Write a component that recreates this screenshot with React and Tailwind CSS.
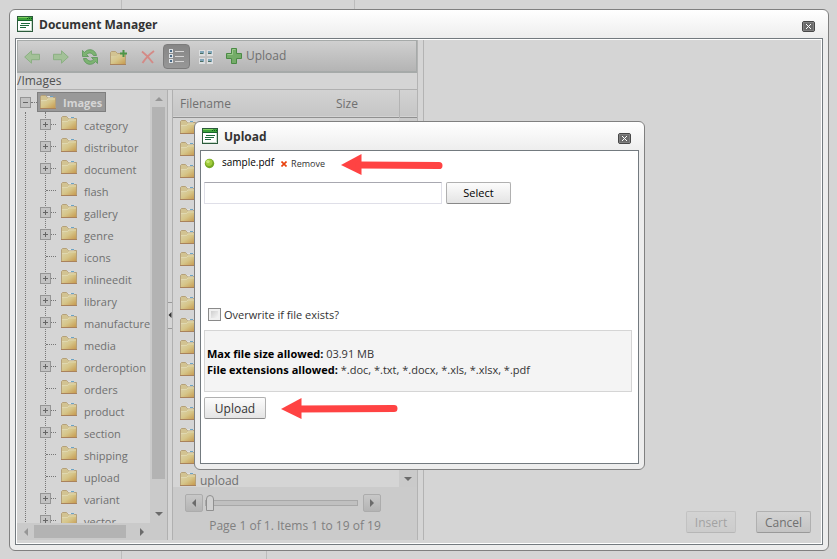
import React, { useState } from "react";
import clsx from "clsx";

const folders = [
  { name: "category", children: true },
  { name: "distributor", children: true },
  { name: "document", children: true },
  { name: "flash" },
  { name: "gallery", children: true },
  { name: "genre", children: true },
  { name: "icons" },
  { name: "inlineedit", children: true },
  { name: "library", children: true },
  { name: "manufacturer", children: true },
  { name: "media" },
  { name: "orderoption", children: true },
  { name: "orders" },
  { name: "product", children: true },
  { name: "section", children: true },
  { name: "shipping" },
  { name: "upload" },
  { name: "variant", children: true },
  { name: "vector", children: true },
];

export default function App() {
  return (
    <div className="relative flex h-screen flex-col overflow-hidden bg-[#d5d5d5] font-['Open_Sans','Noto_Sans',sans-serif] text-xs text-[#707070]">
      <div className="flex h-[9px] shrink-0">
        <div className="w-[122px] border-r border-[#bcbcbc]" />
        <div className="w-[233px] border-r border-[#bcbcbc]" />
      </div>
      <Window title="Document Manager" className="ml-[9px] mr-2 min-h-0 flex-1">
        <div className="flex min-h-0 flex-1 border border-white bg-[#d5d5d5] pb-[3px]">
          <Explorer />
          <div className="flex min-w-0 flex-1 items-end justify-end gap-5 pb-[7px] pr-[10px]">
            <DialogButton className="w-[50px] opacity-50" dim disabled>Insert</DialogButton>
            <DialogButton className="w-[55px]" dim>Cancel</DialogButton>
          </div>
        </div>
      </Window>
      <div className="flex h-2 shrink-0">
        <div className="w-[122px] border-r border-[#bcbcbc]" />
        <div className="w-[145px] border-r border-[#bcbcbc]" />
      </div>
      <Window title="Upload" className="absolute left-[194px] top-[121px] h-[349px] w-[451px]">
        <UploadForm />
      </Window>
      <Arrow className="absolute left-[341px] top-[153px]" length={102} tilt={1} />
      <Arrow className="absolute left-[281px] top-[397px]" length={117} tilt={-1} />
    </div>
  );
}

/* ---------------------- Windows ---------------------- */
const Window = ({ title, className, children }) => (
  <section
    className={clsx(
      "flex flex-col rounded-md border border-[#808080] bg-[#ededed] bg-linear-to-b from-white to-[#ededed] to-[29px] px-[5px] pb-[5px]",
      className
    )}
  >
    <header className="flex h-7 shrink-0 items-center pl-0.5">
      <WindowIcon />
      <h2 className="ml-1.5 flex-1 pt-0.5 font-bold leading-4 text-[#333]">{title}</h2>
      <button aria-label="Close" className="mr-2 mt-1">
        <svg width="13" height="11" viewBox="0 0 13 11">
          <rect x="0.5" y="0.5" width="12" height="10" rx="1.5" fill="#6b6b6b" stroke="#484848" />
          <rect x="1.5" y="1.5" width="10" height="8" fill="none" stroke="#808080" />
          <path d="M4 3l5 5M9 3L4 8" stroke="#fff" />
        </svg>
      </button>
    </header>
    <div className="flex min-h-0 flex-1 flex-col border border-[#737a7f]">{children}</div>
  </section>
);

const UploadForm = () => {
  const [overwrite, setOverwrite] = useState(false);

  return (
    <form className="flex flex-1 flex-col bg-white px-[3px] text-[#333]" onSubmit={(e) => e.preventDefault()}>
      <div className="flex h-6 items-center text-[10px] text-black">
        <svg width="11" height="11" viewBox="0 0 11 11">
          <circle cx="5.5" cy="5.5" r="4.7" fill="#76a824" />
          <circle cx="5" cy="4.6" r="3.4" fill="#a2cc3c" />
          <circle cx="4" cy="3.6" r="1.7" fill="#c8e878" />
        </svg>
        <span className="ml-[7px]">sample.pdf</span>
        <a href="#" className="ml-[7px] flex items-center gap-1 pt-0.5 text-[9px] text-[#333]">
          <svg width="6" height="6" viewBox="0 0 6 6">
            <path d="M0.5 0.5l5 5M5.5 0.5l-5 5" stroke="#e8400c" strokeWidth="1.6" />
          </svg>
          Remove
        </a>
      </div>
      <div className="mt-[7px] flex gap-1">
        <input
          type="text"
          aria-label="File"
          className="h-[22px] w-[238px] border border-[#dfdfe8] border-t-[#a8a8b0] bg-white px-1 outline-none"
        />
        <DialogButton className="w-[65px] text-[11px] text-black">Select</DialogButton>
      </div>
      <label className="mt-[102px] flex h-4 items-center gap-[3px] pl-1 text-[11px]">
        <input
          type="checkbox"
          checked={overwrite}
          onChange={(e) => setOverwrite(e.target.checked)}
          className="size-[13px] appearance-none border border-[#8a8a8a] bg-linear-to-br from-[#c4c4c4] to-white shadow-[inset_0_0_0_2px_#f0f0f0] checked:bg-[#777]"
        />
        <span className="pt-0.5">Overwrite if file exists?</span>
      </label>
      <div className="mt-2 mr-[3px] border border-[#d5d5d5] bg-[#f4f4f4] px-0.5 pb-[13px] pt-[15px] text-[11px] leading-4">
        <p><b className="text-black">Max file size allowed:</b> 03.91 MB</p>
        <p><b className="text-black">File extensions allowed:</b> *.doc, *.txt, *.docx, *.xls, *.xlsx, *.pdf</p>
      </div>
      <DialogButton className="mt-[5px] w-[62px]">Upload</DialogButton>
    </form>
  );
};

/* ---------------------- Explorer ---------------------- */
const Explorer = () => (
  <div className="flex w-[407px] shrink-0 border-r border-[#b3b3b3]">
    <div className="flex min-w-0 flex-1 flex-col border-r border-[#b3b3b3]">
      <Toolbar />
      <div className="h-[17px] border-b border-[#b0b0b0] leading-4 text-[#505050]">/Images</div>
      <div className="flex min-h-0 flex-1">
        <FolderTree />
        <div className="flex w-[6px] items-center border-x border-[#b0b0b0]">
          <button
            aria-label="Collapse"
            className="flex h-[27px] w-full items-center justify-center border-y border-[#999]"
          >
            <Caret dir="left" small />
          </button>
        </div>
        <FileGrid />
      </div>
    </div>
    <div className="w-[5px]" />
  </div>
);

const tools = [
  { label: "Back", icon: <ArrowIcon /> },
  { label: "Forward", icon: <ArrowIcon flip /> },
  { label: "Refresh", icon: <RefreshIcon /> },
  { label: "New folder", icon: <NewFolderIcon /> },
  { label: "Delete", icon: <DeleteIcon /> },
  { label: "List view", icon: <ListIcon />, active: true },
  { label: "Thumbnails view", icon: <ThumbsIcon /> },
];

const Toolbar = () => (
  <div className="flex h-[33px] shrink-0 items-center gap-0.5 border border-b-2 border-[#a6aaa9] bg-linear-to-b from-[#d0d0d0] to-[#b4b4b4]">
    {tools.map((t) => (
      <button
        key={t.label}
        aria-label={t.label}
        className={clsx(
          "flex h-[25px] w-[27px] items-center justify-center rounded-sm",
          t.active ? "border border-[#7c7c7c] bg-linear-to-b from-[#868686] to-[#979797]" : "pt-0.5"
        )}
      >
        {t.icon}
      </button>
    ))}
    <button className="ml-[5px] flex items-center gap-1">
      <svg width="16" height="16" viewBox="0 0 16 16">
        <path
          d="M5.5 0.5h5v5h5v5h-5v5h-5v-5h-5v-5h5z"
          fill="#74ac68"
          stroke="#4b8a45"
          strokeLinejoin="round"
        />
        <path d="M6.5 1.5v5h-5M9.5 1.5h-3" stroke="#9bc98d" fill="none" />
      </svg>
      Upload
    </button>
  </div>
);

const FolderTree = () => (
  <div className="flex w-[150px] shrink-0 flex-col text-[11px]">
    <div className="flex min-h-0 flex-1">
      <div className="min-w-0 flex-1 overflow-hidden pl-[3px] pt-0.5">
        <div className="flex h-5 items-center">
          <Expander open />
          <span className="w-[6px] border-t border-dotted border-[#777]" />
          <div className="flex h-5 items-center gap-[7px] border border-[#7f7f7f] bg-[#999] pl-0.5 pr-[3px] font-bold text-[#d5d5d5]">
            <FolderIcon />
            <span className="pt-0.5">Images</span>
          </div>
        </div>
        <div className="ml-[5px] border-l border-dotted border-[#777] pl-[19px]">
          <ul className="border-l border-dotted border-[#777] pt-0.5">
            {folders.map((f) => (
              <li key={f.name} className="flex h-[22px] items-center">
                {f.children ? (
                  <>
                    <span className="-ml-1.5 mb-0.5 flex shrink-0"><Expander /></span>
                    <span className="mb-0.5 w-[5px] shrink-0 border-t border-dotted border-[#777]" />
                  </>
                ) : (
                  <span className="mb-0.5 w-[10px] shrink-0 border-t border-dotted border-[#777]" />
                )}
                <span className="mb-1 ml-[5px] shrink-0"><FolderIcon /></span>
                <span className="ml-[7px] pt-0.5">{f.name}</span>
              </li>
            ))}
          </ul>
        </div>
      </div>
      <div className="flex w-[17px] flex-col items-center bg-[#cacaca]">
        <button aria-label="Scroll up" className="flex h-[17px] shrink-0 items-center justify-center">
          <Caret dir="up" light />
        </button>
        <div className="w-[13px] flex-1 bg-[#b3b3b3]" />
        <button aria-label="Scroll down" className="flex h-[44px] shrink-0 items-end justify-center pb-[5px]">
          <Caret dir="down" />
        </button>
      </div>
    </div>
    <div className="flex h-[17px] shrink-0 items-center bg-[#cacaca] pr-[17px]">
      <button aria-label="Scroll left" className="flex w-[17px] justify-center"><Caret dir="left" light /></button>
      <div className="h-[13px] w-[92px] bg-[#b3b3b3]" />
      <button aria-label="Scroll right" className="flex flex-1 justify-end pr-1"><Caret dir="right" /></button>
    </div>
  </div>
);

const FileGrid = () => (
  <div className="flex min-w-0 flex-1 flex-col">
    <div className="flex min-h-0 flex-1">
      <div className="flex min-w-0 flex-1 flex-col overflow-hidden">
        <table className="w-full table-fixed text-left">
          <thead>
            <tr className="h-[27px] border-b border-[#909090] bg-linear-to-b from-[#d3d3d3] to-[#c6c6c6]">
              <th className="pl-[7px] pt-0.5 font-normal">Filename</th>
              <th className="w-[82px] pl-[19px] pt-0.5 font-normal">Size</th>
              <th className="w-[18px] border-l border-[#b3b3b3]" />
            </tr>
          </thead>
          <tbody>
            {folders.map((f, i) => (
              <tr key={f.name} className="h-[22px]">
                <td className="p-0 pl-[7px]" colSpan={2}>
                  <div className="flex h-[22px] items-center gap-1">
                    <span className="mb-1"><FolderIcon /></span>
                    {f.name}
                  </div>
                </td>
                {i === 0 && (
                  <td rowSpan={folders.length} className="bg-[#cacaca] p-0 align-top">
                    <div className="flex h-[365px] items-end justify-center">
                      <Caret dir="down" />
                    </div>
                  </td>
                )}
              </tr>
            ))}
          </tbody>
        </table>
      </div>
    </div>
    <div className="flex h-[53px] shrink-0 flex-col items-center bg-[#cbcbcb] pt-[7px]">
      <div className="ml-3 flex items-center self-start">
        <PagerButton label="Previous page"><Caret dir="left" /></PagerButton>
        <input
          type="range"
          min="1"
          max="19"
          defaultValue="1"
          aria-label="Page"
          className="ml-0.5 mr-[5px] h-[18px] w-[153px] appearance-none bg-transparent [&::-webkit-slider-runnable-track]:h-[6px] [&::-webkit-slider-runnable-track]:border [&::-webkit-slider-runnable-track]:border-[#a8a8a8] [&::-webkit-slider-runnable-track]:bg-[#c0c0c0] [&::-webkit-slider-thumb]:-mt-[6px] [&::-webkit-slider-thumb]:h-4 [&::-webkit-slider-thumb]:w-2 [&::-webkit-slider-thumb]:appearance-none [&::-webkit-slider-thumb]:rounded-t-full [&::-webkit-slider-thumb]:rounded-b-xs [&::-webkit-slider-thumb]:border [&::-webkit-slider-thumb]:border-[#909090] [&::-webkit-slider-thumb]:bg-[#d0d0d0]"
        />
        <PagerButton label="Next page"><Caret dir="right" /></PagerButton>
      </div>
      <p className="mt-1.5 whitespace-nowrap leading-4 text-[#808080]">Page 1 of 1. Items 1 to 19 of 19</p>
    </div>
  </div>
);

/* ---------------------- Controls ---------------------- */
const DialogButton = ({ children, className, dim, disabled }) => (
  <button
    type="button"
    disabled={disabled}
    className={clsx(
      "flex h-[22px] items-center justify-center rounded-xs border pt-px",
      dim
        ? "border-[#b0b0b0] border-b-[#999] bg-linear-to-b from-[#d3d3d3] to-[#c4c4c4]"
        : "border-[#b0b0b0] border-b-[#888] bg-linear-to-b from-[#fcfcfc] to-[#e4e4e4]",
      className
    )}
  >
    {children}
  </button>
);

const PagerButton = ({ label, children }) => (
  <button
    aria-label={label}
    className="flex size-[18px] items-center justify-center rounded-xs border border-[#acacac] bg-linear-to-b from-[#c8c8c8] to-[#b4b4b4]"
  >
    {children}
  </button>
);

const Expander = ({ open }) => (
  <svg width="11" height="11" viewBox="0 0 11 11" className="shrink-0">
    <rect x="0.5" y="0.5" width="10" height="10" fill="#c3c3c3" stroke="#959595" />
    <path d={open ? "M3 5.5h5" : "M3 5.5h5M5.5 3v5"} stroke="#666" />
  </svg>
);

const caretPaths = {
  up: "M0 6l4-4 4 4z",
  down: "M0 2h8l-4 4z",
  left: "M6 0v8L2 4z",
  right: "M2 0l4 4-4 4z",
};

const Caret = ({ dir, light, small }) => (
  <svg width={small ? 4 : 8} height={small ? 6 : 8} viewBox={small ? "2 0 4 8" : "0 0 8 8"}>
    <path d={caretPaths[dir]} fill={small ? "#333" : light ? "#969696" : "#6b6b6b"} />
  </svg>
);

/* Callout arrow pointing left */
const Arrow = ({ className, length, tilt }) => (
  <svg className={className} width={length} height="24" viewBox={`0 0 ${length} 24`}>
    <path d="M0 12L20.500 1v21z" fill="#ff4343" />
    <path d={`M18 12L${length - 4} ${12 + tilt * 0.6}`} stroke="#ff4343" strokeWidth="7" strokeLinecap="round" />
  </svg>
);

/* ---------------------- Icons ---------------------- */
function WindowIcon() {
  return (
    <svg width="16" height="16" viewBox="0 0 16 16" className="shrink-0">
      <rect x="0.5" y="0.5" width="15" height="15" fill="#fff" stroke="#2c5a3c" />
      <path d="M1 1h14v3H1z" fill="#3ca23a" />
      <path d="M1 1.500h10" stroke="#7fd05e" />
      <path d="M10 2.500h1M12 2.500h1M14 2.500h1" stroke="#0e5a18" />
      <path d="M1 4.500h14" stroke="#17652c" />
      <path d="M4 7.500h9M3 9.500h9M3 11.500h6" stroke="#1d6a3c" />
      <path d="M14.500 5v9.500H1" stroke="#c8dccc" fill="none" />
    </svg>
  );
}

function FolderIcon() {
  return (
    <svg width="16" height="14" viewBox="0 0 16 14" className="shrink-0">
      <defs>
        <linearGradient id="folder" x1="0" y1="0" x2="1" y2="1">
          <stop offset="0" stopColor="#dbd3ac" />
          <stop offset="0.5" stopColor="#d6c589" />
          <stop offset="1" stopColor="#c79b50" />
        </linearGradient>
      </defs>
      <path d="M0.500 13V1.500L1.500 0.500h4l2 2h8v10.500z" fill="#d2c392" stroke="#b5a079" />
      <path d="M6.500 1h5l2 1.500H8z" fill="#e2e2de" />
      <path d="M10 1.500h3" stroke="#6ba3c4" />
      <path d="M1 13V5h5.500L8 3.500h7V13z" fill="url(#folder)" />
      <path d="M1 5.500h5.500L8 4h7" stroke="#e2dab4" strokeWidth="0.8" fill="none" />
      <path d="M0 13.500h16" stroke="#a9825c" />
    </svg>
  );
}

function ArrowIcon({ flip }) {
  return (
    <svg width="16" height="14" viewBox="0 0 16 14" className={flip ? "-scale-x-100" : undefined}>
      <path
        d="M0.700 7L7.500 0.800v3.500h8v5.400h-8v3.500z"
        fill="#a3c198"
        stroke="#8bb083"
        strokeLinejoin="round"
      />
    </svg>
  );
}

function RefreshIcon() {
  return (
    <svg width="16" height="16" viewBox="0 0 16 16">
      <g fill="#7db372" stroke="#529050" strokeWidth="0.7" strokeLinejoin="round">
        <path d="M0.500 1.500v6H6.500L4.600 5.600C6.500 3.400 9.500 3.200 11.500 6.500h3C13.500 0.500 6.500-1.500 2.500 3.400z" />
        <path d="M15.500 14.500v-6H9.500l1.900 1.900c-1.900 2.200-4.900 2.400-6.900-0.900h-3C2.500 15.500 9.500 17.500 13.500 12.600z" />
      </g>
    </svg>
  );
}

function NewFolderIcon() {
  return (
    <svg width="17" height="15" viewBox="0 0 17 15">
      <path d="M0.500 14V2.500l1-1h4l2 2h8V14z" fill="#d2c392" stroke="#b5a079" />
      <path d="M1 14V6h5.500L8 4.500h7V14z" fill="url(#folder)" />
      <path d="M0 14.500h16" stroke="#a9825c" />
      <path d="M13.500 0v7M10 3.500h7" stroke="#4d9548" strokeWidth="2" />
    </svg>
  );
}

function DeleteIcon() {
  return (
    <svg width="14" height="14" viewBox="0 0 14 14">
      <path d="M1 1.500C5 4.500 9 9 12 13M13 1C9 4 4 9 1.500 13" fill="none" stroke="#d48a86" strokeWidth="1.900" />
    </svg>
  );
}

function ListIcon() {
  return (
    <svg width="15" height="15" viewBox="0 0 15 15">
      {[0, 5, 10].map((y) => (
        <g key={y}>
          <rect x="0" y={y} width="4" height="4" fill="#dfe3e6" />
          <rect x="1" y={y + 1} width="2" height="2" fill="#4c6c88" />
          <path d={`M6 ${y + 2.5}h9`} stroke="#d5d5d5" />
        </g>
      ))}
    </svg>
  );
}

function ThumbsIcon() {
  return (
    <svg width="14" height="14" viewBox="0 0 14 14">
      {[[0, 0], [8, 0], [0, 8], [8, 8]].map(([x, y]) => (
        <g key={`${x}-${y}`}>
          <rect x={x} y={y} width="6" height="6" fill="#dcdedf" />
          <rect x={x + 1} y={y + 1} width="4" height="3" fill="#7fa5b8" />
          <path d={`M${x + 1} ${y + 3.5}h3`} stroke="#4e6f62" />
        </g>
      ))}
    </svg>
  );
}
